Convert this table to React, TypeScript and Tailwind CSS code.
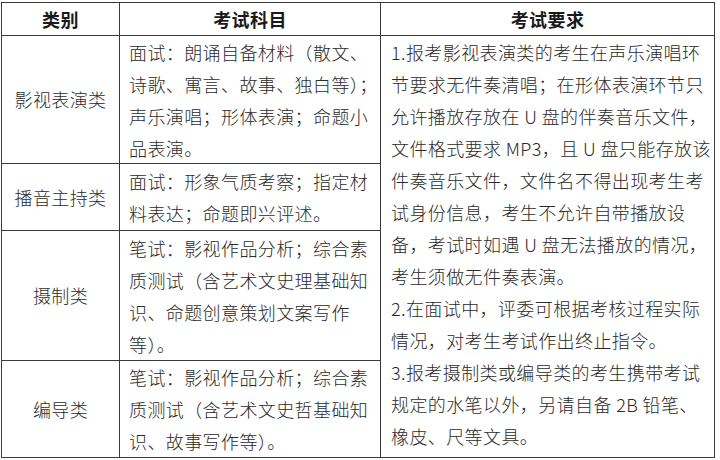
import React from "react";

const font = { fontFamily: '"Noto Sans CJK SC", "Noto Sans", sans-serif' };

const Lines = ({ lines }: { lines: string[] }) => (
  <>
    {lines.map((l, i) => (
      <div key={i} className="whitespace-nowrap">
        {l}
      </div>
    ))}
  </>
);

export default function App() {
  const col2 = [
    ["面试：朗诵自备材料（散文、", "诗歌、寓言、故事、独白等）；", "声乐演唱；形体表演；命题小", "品表演。"],
    ["面试：形象气质考察；指定材", "料表达；命题即兴评述。"],
    ["笔试：影视作品分析；综合素", "质测试（含艺术文史理基础知", "识、命题创意策划文案写作", "等）。"],
    ["笔试：影视作品分析；综合素", "质测试（含艺术文史哲基础知", "识、故事写作等）。"],
  ];
  const col1 = ["影视表演类", "播音主持类", "摄制类", "编导类"];
  const col3 = [
    "1.报考影视表演类的考生在声乐演唱环",
    "节要求无件奏清唱；在形体表演环节只",
    "允许播放存放在 U 盘的伴奏音乐文件，",
    "文件格式要求 MP3，且 U 盘只能存放该",
    "件奏音乐文件，文件名不得出现考生考",
    "试身份信息，考生不允许自带播放设",
    "备，考试时如遇 U 盘无法播放的情况，",
    "考生须做无件奏表演。",
    "2.在面试中，评委可根据考核过程实际",
    "情况，对考生考试作出终止指令。",
    "3.报考摄制类或编导类的考生携带考试",
    "规定的水笔以外，另请自备 2B 铅笔、",
    "橡皮、尺等文具。",
  ];
  return (
    <div className="w-[720px] h-[460px] bg-white overflow-hidden text-[#2b2b2b] text-[18px] tracking-[0.4px] font-light" style={font}>
      <div className="ml-px mt-[2px] inline-grid grid-cols-[117px_260px_333px] grid-rows-[32px_127px_66px_129px_96px] gap-px bg-[#3a3a3a] p-px">
        <div className="bg-white flex items-center justify-center font-bold text-[#1a1a1a]">类别</div>
        <div className="bg-white flex items-center justify-center font-bold text-[#1a1a1a]">考试科目</div>
        <div className="bg-white flex items-center justify-center font-bold text-[#1a1a1a]">考试要求</div>

        <div className="bg-white flex items-center justify-center">{col1[0]}</div>
        <div className="bg-white flex flex-col justify-center pl-[9px] leading-[32px]">
          <Lines lines={col2[0]} />
        </div>
        <div className="bg-white row-span-4 pl-[10px] leading-[32px]">
          <Lines lines={col3} />
        </div>

        <div className="bg-white flex items-center justify-center">{col1[1]}</div>
        <div className="bg-white flex flex-col justify-center pl-[9px] leading-[32px]">
          <Lines lines={col2[1]} />
        </div>

        <div className="bg-white flex items-center justify-center">{col1[2]}</div>
        <div className="bg-white flex flex-col justify-center pl-[9px] leading-[32px]">
          <Lines lines={col2[2]} />
        </div>

        <div className="bg-white flex items-center justify-center">{col1[3]}</div>
        <div className="bg-white flex flex-col justify-center pl-[9px] leading-[32px]">
          <Lines lines={col2[3]} />
        </div>
      </div>
    </div>
  );
}
